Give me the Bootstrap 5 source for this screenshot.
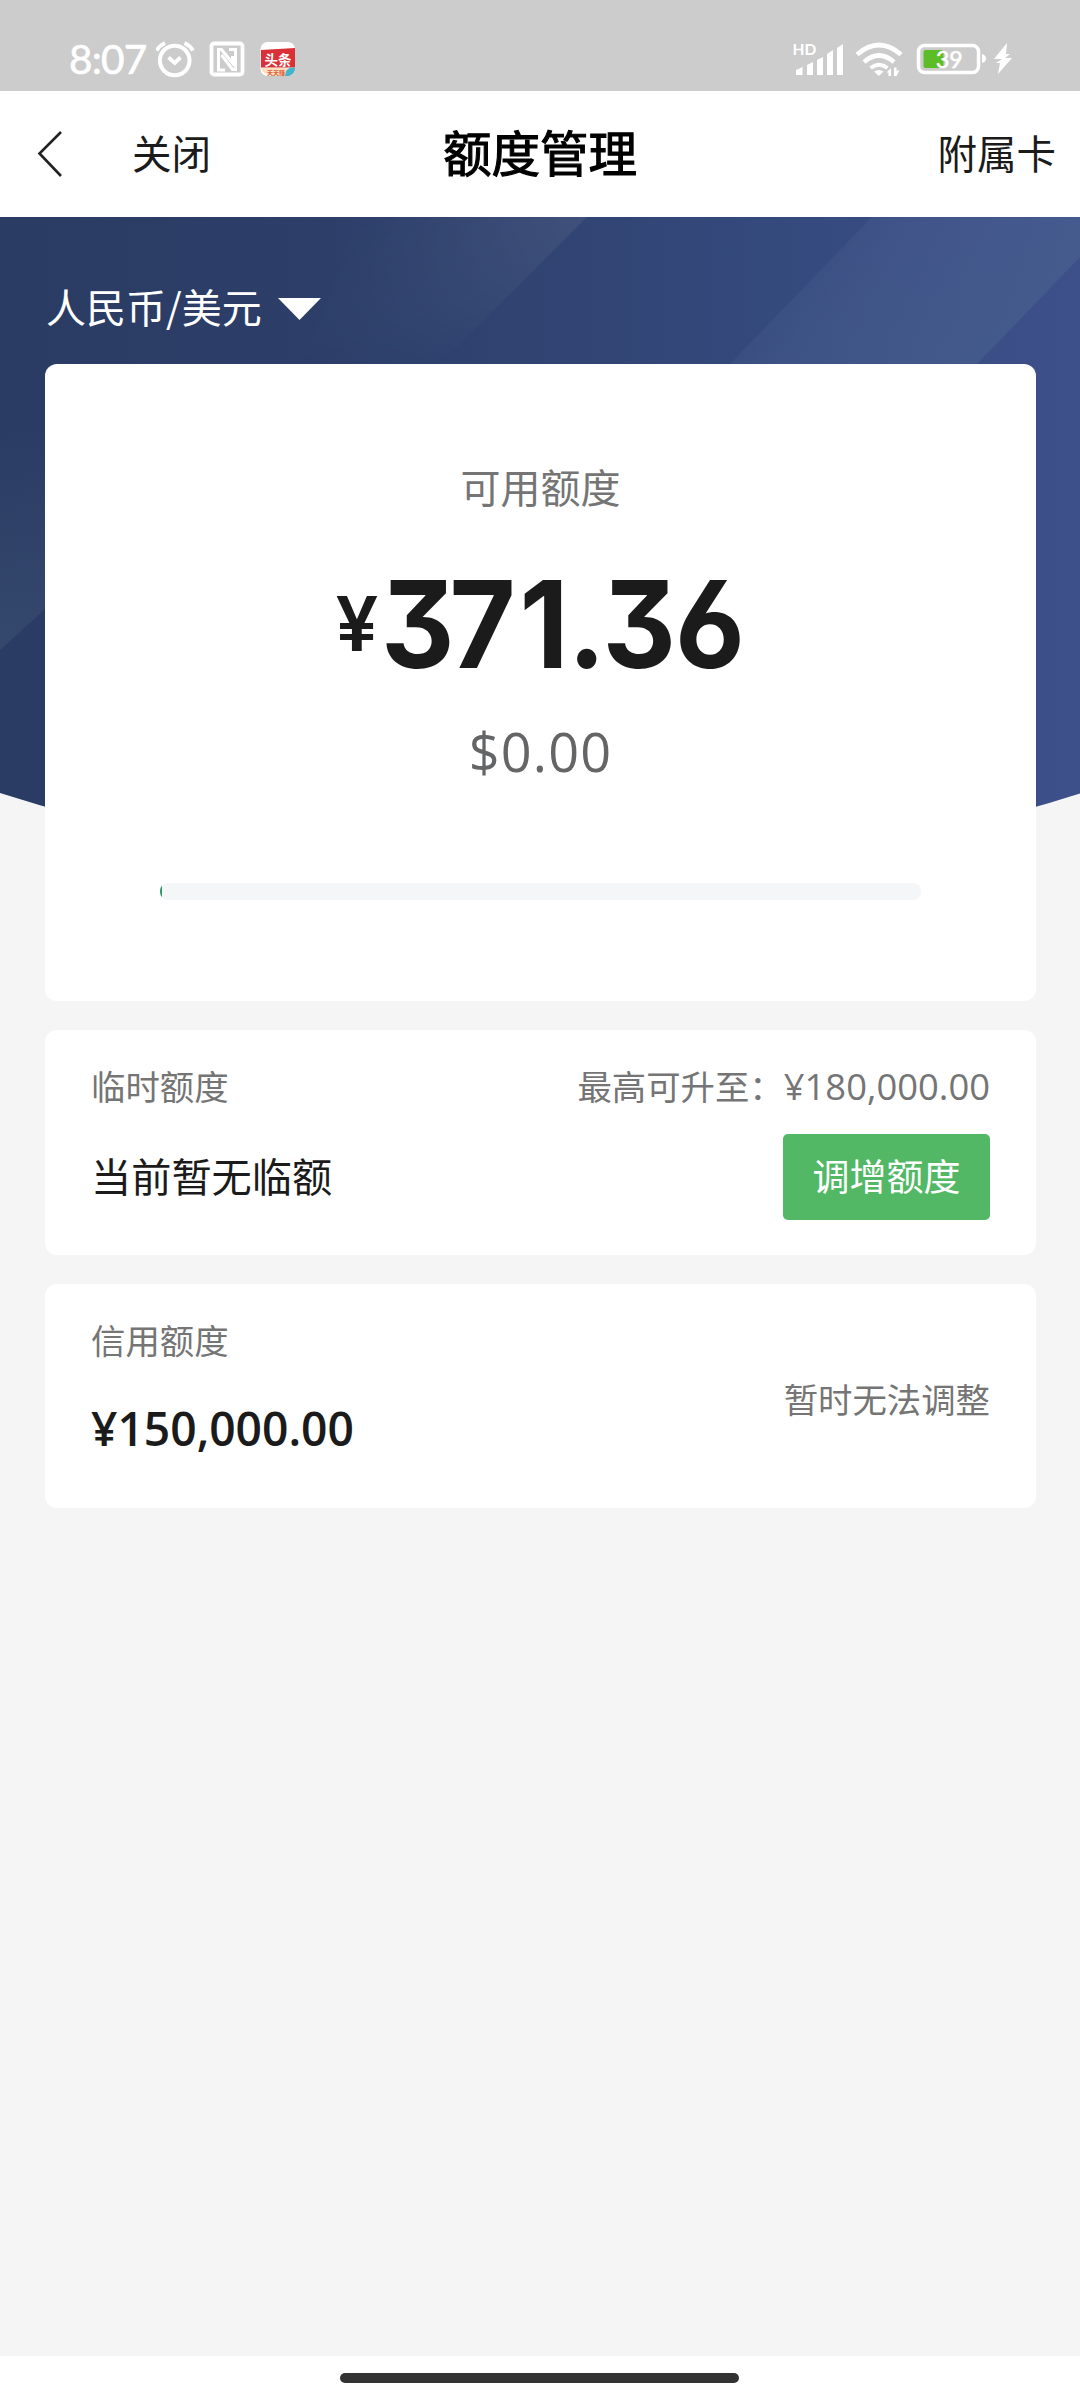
<!DOCTYPE html>
<html lang="zh-CN">
<head>
<meta charset="utf-8">
<meta name="viewport" content="width=device-width, initial-scale=1">
<title>额度管理</title>
<link href="https://cdn.jsdelivr.net/npm/bootstrap@5.3.0/dist/css/bootstrap.min.css" rel="stylesheet">
<style>
body{font-family:"Noto Sans CJK SC",sans-serif;background:#f5f5f5;color:#1b1b1b;line-height:1;height:2400px;overflow:hidden}
.num{font-family:"Open Sans","Noto Sans CJK SC",sans-serif}
.grey{color:#757575}
.status-bar{height:91px;background:#ccc;padding:29px 66px 0 69px}
.status-bar svg{display:block;flex:none}
.clock{font-size:40.5px;font-family:Lato,sans-serif;letter-spacing:-.8px;width:87px;white-space:nowrap;-webkit-text-stroke:.6px #fff;padding-bottom:2px}
.title-bar{height:126px;padding:0 24px 5px 37px;font-size:39.5px}
.title-bar svg{margin-top:4px}
.page-title{font-size:48.5px;color:#000;-webkit-text-stroke:1.1px #000}
.title-side{width:300px}
.title-side.side-left{width:287px}
.hero{padding:0 44px 0 45px}
.hero-bg{left:0;top:0;width:1080px;height:620px;z-index:-1}
.currency{height:147px;font-size:40px;color:#fff}
.currency-name{margin:30px 0 0 1px}
.currency svg{margin-top:36px}
.panel{background:#fff;border:0;border-radius:12px}
.panel-main{height:637px;padding-top:94px}
.caption{font-size:40px;line-height:56px}
.amount{margin-top:31px;font-family:Inter,sans-serif;font-feature-settings:"ss01","cv09","cv03"}
.usd{font-size:54px;color:#646567;line-height:54px;letter-spacing:1.2px;margin-top:19px}
.limit-track{width:761px;height:17px;border-radius:8px;background:#f5f6f8;margin-top:105px}
.limit-track .progress-bar{background:#2f9468}
.stack-area{gap:29px;padding:29px 44px 0 45px}
.panel-row{height:224.5px;padding:0 46px}
.label-text{font-size:34.4px}
.line-top{line-height:60px;height:60px;margin-top:25px}
.raise-num{font-size:36.4px;padding-top:1px}
.temp-state{font-size:40.2px;margin-top:16px}
.btn-raise{width:207px;height:86px;border-radius:5px;background:#52b865;color:#fff;font-size:37px;padding:0 0 3px;border:0;margin-top:19px}
.credit-num{font-size:46.200px;font-weight:600;line-height:60px;margin-top:30px}
.adjust-note{align-self:center;padding-top:5px}
.home-area{height:44px;background:#fff;padding-top:17px}
.home-pill{width:399px;height:10px;border-radius:5px;background:#333;margin-right:2px}
</style>
<script src="https://cdn.jsdelivr.net/npm/bootstrap@5.3.0/dist/js/bootstrap.bundle.min.js"></script>
</head>
<body class="d-flex flex-column">
<header class="status-bar d-flex align-items-center justify-content-between text-white flex-shrink-0">
  <div class="d-flex align-items-center">
    <span class="clock">8:07</span>
    <svg width="140" height="40" viewBox="156 40 140 40" fill="none" stroke="#fff">
      <circle cx="174.7" cy="60.5" r="14.8" stroke-width="4"/>
      <path d="M168.500 57.500l6.200 5.500 5.800-5.500" stroke-width="3.800"/>
      <path d="M156.500 50.500q3-5 8.500-7.500M184.500 43q5.500 2.500 8.500 7.500" stroke-width="3.800"/>
      <rect x="211.500" y="43.500" width="31" height="31" rx="2.500" stroke-width="3.800"/>
      <path d="M225 70h-6.500V49.500h3L232.500 63V56M229 49.500h6.500V69.500h-3L221.500 55" stroke-width="3"/>
      <g stroke="none">
        <rect x="260.500" y="42" width="34.500" height="34" rx="7" fill="#fff"/>
        <path d="M261 50l34-2v19.500h-34z" fill="#da3037"/>
        <path d="M261 68h34v1q0 7-7 7h-16q-9-2-11-8z" fill="#fde0c0"/>
        <path d="M286 71l4-3.500h5v2q-1 5-6 6.500h-4z" fill="#44b5cc"/>
        <text x="264.500" y="64.500" font-size="13.500" font-weight="700" fill="#fff">头条</text>
        <text x="267" y="74.500" font-size="6" font-weight="700" fill="#df5a37">天天赚</text>
      </g>
    </svg>
  </div>
  <svg width="222" height="40" viewBox="792 40 222 40" fill="#fff">
    <text x="792.500" y="55" font-size="15.500" font-weight="700" font-family="Lato">HD</text>
    <path d="M796 75v-5l6.500-3V75zM807 75V65l6-3V75zM817 75V60l6-3V75zM827 75V54l6-4V75zM837 75V48l6-4V75z"/>
    <g fill="none" stroke="#fff" stroke-width="4.600">
      <path d="M857 54.500q22-19 44 0M864 62q15-13 30 0"/><path d="M870.500 68q8.500-6.500 17 0" stroke-width="4"/>
    </g>
    <path d="M874 71.500q5-3 9.500 0l-4.700 4.500zM891 68v8h-2.500v-3.500l-2 0zM894 67.500h2.500V71l3-1-3 6H894z"/>
    <rect x="918.500" y="45.500" width="60" height="27" rx="6" fill="none" stroke="#fff" stroke-width="3.500"/>
    <rect x="923.500" y="50" width="20" height="18" rx="2" fill="#5cbd27"/>
    <text x="936" y="67.500" font-size="23" font-family="Lato" stroke="#fff" stroke-width=".6">39</text>
    <path d="M982 54q4 1 4 4.500t-4 4.500zM1007 43l-13 16h8l-6 4h4l-2 11 14-16h-7l5-4h-4z"/>
  </svg>
</header>

<nav class="title-bar d-flex align-items-center justify-content-between bg-white flex-shrink-0">
  <div class="title-side side-left d-flex align-items-center">
    <svg width="95" height="46" viewBox="0 0 95 46" fill="none" stroke="#222" stroke-width="2.600"><path d="M24 1L2.500 22.500 24 45"/></svg>
    <span>关闭</span>
  </div>
  <span class="page-title">额度管理</span>
  <div class="title-side text-end">附属卡</div>
</nav>

<main class="flex-grow-1">
  <section class="hero position-relative z-0">
    <svg class="hero-bg position-absolute" viewBox="0 217 1080 620">
      <defs>
        <linearGradient id="base" x1="0" y1="0" x2="1" y2="0"><stop offset="0" stop-color="#2a3c63"/><stop offset=".3" stop-color="#2d3f69"/><stop offset=".75" stop-color="#354a7e"/><stop offset="1" stop-color="#3e508a"/></linearGradient>
        <linearGradient id="band" gradientUnits="userSpaceOnUse" x1="430" y1="140" x2="560" y2="255"><stop offset="0" stop-color="#5d6b88" stop-opacity="0"/><stop offset="1" stop-color="#5d6b88" stop-opacity=".34"/></linearGradient>
        <linearGradient id="fade" x1="0" y1="0" x2="0" y2="1"><stop offset="0" stop-color="#fff"/><stop offset="1" stop-color="#000"/></linearGradient>
        <mask id="fadeMask"><rect x="300" y="217" width="320" height="147" fill="url(#fade)"/></mask>
        <linearGradient id="band2" gradientUnits="userSpaceOnUse" x1="790" y1="240" x2="980" y2="400"><stop offset="0" stop-color="#54689a" stop-opacity=".1"/><stop offset=".3" stop-color="#54689a" stop-opacity=".28"/><stop offset="1" stop-color="#4d6a92" stop-opacity=".45"/></linearGradient>
        <linearGradient id="leftBand" x1="0" y1="0" x2="0" y2="1"><stop offset="0" stop-color="#4c6080" stop-opacity="0"/><stop offset="1" stop-color="#4c6080" stop-opacity=".32"/></linearGradient>
      </defs>
      <path d="M0 217H1080V793.500Q540 965 0 793z" fill="url(#base)"/>
      <path d="M360 217H587L440 364H300z" fill="url(#band)" mask="url(#fadeMask)"/>
      <path d="M872 217H1080V257L977 364H730z" fill="url(#band2)"/>
      <path d="M0 430H45V609L0 650z" fill="url(#leftBand)"/>
    </svg>
    <div class="currency d-flex align-items-center">
      <span class="currency-name">人民币/美元</span>
      <svg class="ms-3" width="43" height="22" viewBox="0 0 43 22"><path d="M0 0H43L21.500 22z" fill="#fff"/></svg>
    </div>
    <div class="card panel panel-main align-items-center">
      <div class="grey caption">可用额度</div>
      <svg class="amount" width="430" height="160" viewBox="325 545 430 160" fill="#1b1b1b">
        <text x="334.500" y="650.500" font-size="76" font-weight="600">¥</text>
        <text transform="scale(.94 1)" x="404.300 477 551.500 603 640 717" y="668" font-size="121" font-weight="650">371.36</text>
      </svg>
      <div class="usd num">$0.00</div>
      <div class="progress limit-track"><div class="progress-bar" style="width:.3%"></div></div>
    </div>
  </section>

  <section class="stack-area d-flex flex-column">
    <div class="card panel panel-row">
      <div class="d-flex justify-content-between grey label-text line-top">
        <span>临时额度</span>
        <span class="d-flex"><span>最高可升至：</span><span class="num raise-num">¥180,000.00</span></span>
      </div>
      <div class="d-flex justify-content-between align-items-center">
        <span class="temp-state">当前暂无临额</span>
        <button class="btn btn-raise" type="button">调增额度</button>
      </div>
    </div>
    <div class="card panel panel-row flex-row justify-content-between">
      <div class="d-flex flex-column">
        <span class="grey label-text line-top">信用额度</span>
        <span class="num credit-num">¥150,000.00</span>
      </div>
      <span class="grey label-text adjust-note">暂时无法调整</span>
    </div>
  </section>
</main>

<footer class="home-area d-flex justify-content-center flex-shrink-0"><div class="home-pill"></div></footer>
</body>
</html>
